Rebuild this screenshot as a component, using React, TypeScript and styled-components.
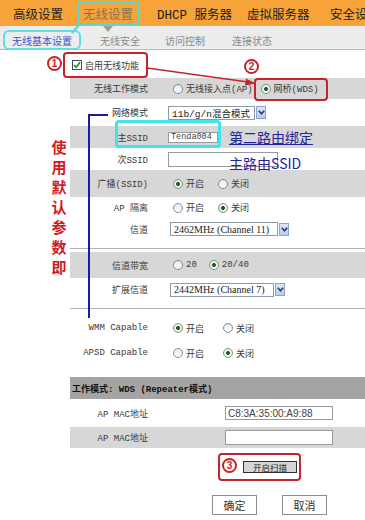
import React from "react";
import styled, { createGlobalStyle, css } from "styled-components";

const GlobalStyle = createGlobalStyle`
  html, body { margin: 0; padding: 0; background: #fff; }
  body { font-family: "Noto Sans CJK SC", sans-serif; }
  * { box-sizing: border-box; }
`;

const Page = styled.div`
  position: relative;
  width: 365px;
  height: 520px;
  overflow: hidden;
  background: #fff;
`;

/* ---------- top navigation ---------- */
const TopNav = styled.nav`
  display: grid;
  grid-template-columns: 70px 74px 90px 83px 1fr;
  align-items: center;
  height: 26px;
  padding-left: 7px;
  background: #f6a43a;
  position: relative;
  z-index: 2;
  overflow: hidden;
`;

const NavItem = styled.div<{ $active?: boolean }>`
  position: relative;
  justify-self: start;
  display: flex;
  align-items: center;
  height: 25px;
  padding: 0 6px;
  font: 12.5px "Liberation Mono", "Noto Sans CJK SC", monospace;
  color: #1c1c1c;
  white-space: nowrap;
  ${(p) =>
    p.$active &&
    css`
      color: #857257;
      border-radius: 3px;
      box-shadow: inset 0 0 0 2px #5bd7cf;
    `}
`;

const NavPointer = styled.div`
  position: absolute;
  left: 103px;
  top: 26px;
  border-top: 6px solid #9c9c9c;
  border-left: 5px solid transparent;
  border-right: 5px solid transparent;
  z-index: 3;
`;

/* ---------- sub navigation ---------- */
const SubNav = styled.nav`
  display: grid;
  grid-template-columns: 88px 65px 67px 1fr;
  align-items: end;
  height: 24px;
  padding: 0 0 1px 5px;
  background: #ececec;
  border-bottom: 1px solid #b9b9b9;
`;

const SubItem = styled.div<{ $active?: boolean }>`
  justify-self: start;
  display: flex;
  align-items: center;
  height: 16px;
  padding: 0 7px;
  font: 10px "Noto Sans CJK SC", sans-serif;
  color: #8a8a8a;
  white-space: nowrap;
  ${(p) =>
    p.$active &&
    css`
      color: #3657c9;
      border-radius: 4px;
      box-shadow: 0 0 0 2px #5ee0de;
    `}
`;

/* ---------- main body ---------- */
const Body = styled.div`
  display: flex;
`;

const Gutter = styled.div`
  width: 70px;
  flex: none;
`;

const Form = styled.div`
  flex: 1;
  padding-top: 2px;
`;

const Row = styled.div<{ $h: number; $shade?: boolean }>`
  display: grid;
  grid-template-columns: 78px 1fr;
  column-gap: 20px;
  align-items: center;
  height: ${(p) => p.$h}px;
  background: ${(p) => (p.$shade ? "#d7d7d7" : "transparent")};
`;

const PlainRow = styled.div<{ $h: number }>`
  display: flex;
  align-items: center;
  height: ${(p) => p.$h}px;
  padding-left: 2px;
  gap: 3px;
`;

const Label = styled.div`
  text-align: right;
  font: 9px "Liberation Mono", "Noto Sans CJK SC", monospace;
  color: #3a3a3a;
  white-space: nowrap;
`;

const Text = styled.span`
  font: 9px "Liberation Mono", "Noto Sans CJK SC", monospace;
  color: #3a3a3a;
  white-space: nowrap;
`;

const Controls = styled.div<{ $indent?: number }>`
  display: flex;
  align-items: center;
  padding-left: ${(p) => p.$indent ?? 0}px;
`;

const Divider = styled.hr<{ $above: number; $below: number }>`
  margin: ${(p) => p.$above}px 0 ${(p) => p.$below}px;
  border: 0;
  border-top: 1px solid #b3b3b3;
  height: 0;
`;

const SectionHead = styled.div`
  display: flex;
  align-items: center;
  height: 22px;
  margin-top: 12px;
  padding-left: 2px;
  background: #a4a4a4;
  font: bold 9px "Liberation Mono", "Noto Sans CJK SC", monospace;
  color: #111;
  white-space: nowrap;
`;

/* ---------- controls ---------- */
const Check = styled.span`
  display: inline-flex;
  align-items: center;
  justify-content: center;
  width: 10px;
  height: 10px;
  border: 1px solid #4b4b4b;
  background: #fff;
`;

const RadioGroup = styled.div<{ $gap: number }>`
  display: flex;
  align-items: center;
  gap: ${(p) => p.$gap}px;
  padding-left: 5px;
`;

const RadioItem = styled.label`
  display: flex;
  align-items: center;
  gap: 3px;
`;

const RadioDot = styled.span<{ $on?: boolean }>`
  width: 10px;
  height: 10px;
  border-radius: 50%;
  border: 1px solid ${(p) => (p.$on ? "#6f9a72" : "#7d8c9b")};
  background: ${(p) =>
    p.$on
      ? "radial-gradient(circle, #2c562e 0 1.6px, #e6efe6 2.2px, #fff 100%)"
      : "linear-gradient(#e9e9e9, #fff)"};
`;

const Select = styled.div`
  display: flex;
  align-items: center;
  gap: 1px;
`;

const SelectText = styled.span<{ $w: number; $serif?: boolean }>`
  display: flex;
  align-items: center;
  width: ${(p) => p.$w}px;
  height: 14px;
  padding-left: 3px;
  border: 1px solid #8e9aa6;
  background: #fff;
  font: ${(p) =>
    p.$serif
      ? '10px "Liberation Serif", "Noto Sans CJK SC", serif'
      : '9.5px "Liberation Mono", "Noto Sans CJK SC", monospace'};
  color: #222;
  white-space: nowrap;
  overflow: hidden;
`;

const DropBtn = styled.span`
  display: flex;
  align-items: center;
  justify-content: center;
  width: 10px;
  height: 13px;
  border: 1px solid #8fa4c8;
  background: linear-gradient(#dbe6fb, #b9cbf1);
`;

const Field = styled.input<{ $w: number; $h: number; $mono?: boolean }>`
  width: ${(p) => p.$w}px;
  height: ${(p) => p.$h}px;
  padding: 0 0 0 2px;
  margin: 0;
  border: 1px solid #9a9a9a;
  background: #fff;
  outline: none;
  font: ${(p) =>
    p.$mono
      ? '8.5px "Liberation Mono", monospace'
      : '10px "Liberation Sans", "Noto Sans", sans-serif'};
  color: #444;
`;

const ScanRow = styled.div`
  display: flex;
  height: 36px;
  padding: 13px 0 0 173px;
`;

const ScanButton = styled.button`
  width: 54px;
  height: 12px;
  padding: 0;
  border: 1px solid #333;
  background: #d6d6d6;
  font: 8.5px "Noto Sans CJK SC", sans-serif;
  line-height: 10px;
  color: #222;
`;

const ButtonRow = styled.div`
  display: flex;
  gap: 25px;
  padding: 11px 0 0 142px;
`;

const Button = styled.button`
  width: 45px;
  height: 20px;
  padding: 0;
  border: 1px solid #8c8c8c;
  background: #fff;
  font: 11px "Noto Sans CJK SC", sans-serif;
  color: #333;
`;

/* ---------- annotations (overlay) ---------- */
const Mark = styled.div<{ $x: number; $y: number; $w: number; $h: number; $c: string; $b: number; $r?: number }>`
  position: absolute;
  left: ${(p) => p.$x}px;
  top: ${(p) => p.$y}px;
  width: ${(p) => p.$w}px;
  height: ${(p) => p.$h}px;
  border: ${(p) => p.$b}px solid ${(p) => p.$c};
  border-radius: ${(p) => p.$r ?? 4}px;
  pointer-events: none;
  z-index: 3;
`;

const Num = styled.div<{ $x: number; $y: number }>`
  position: absolute;
  left: ${(p) => p.$x}px;
  top: ${(p) => p.$y}px;
  width: 15px;
  height: 15px;
  border: 2px solid #c8232b;
  border-radius: 50%;
  display: flex;
  align-items: center;
  justify-content: center;
  font: bold 10px "Liberation Sans", sans-serif;
  color: #c8232b;
  background: #fff;
  z-index: 3;
`;

const Drawing = styled.svg<{ $x: number; $y: number }>`
  position: absolute;
  left: ${(p) => p.$x}px;
  top: ${(p) => p.$y}px;
  overflow: visible;
  z-index: 3;
  pointer-events: none;
`;

const Bracket = styled.div`
  position: absolute;
  left: 88px;
  top: 114px;
  width: 20px;
  height: 204px;
  border-left: 2px solid #1b1ba3;
  border-top: 2px solid #1b1ba3;
  z-index: 3;
`;

const Note = styled.div<{ $x: number; $y: number; $u?: boolean }>`
  position: absolute;
  left: ${(p) => p.$x}px;
  top: ${(p) => p.$y}px;
  font: 14px "Noto Sans CJK SC", sans-serif;
  line-height: 16px;
  color: #22249b;
  white-space: nowrap;
  text-decoration: ${(p) => (p.$u ? "underline" : "none")};
  text-underline-offset: 1px;
  z-index: 3;
`;

const Vertical = styled.div`
  position: absolute;
  left: 51px;
  top: 137px;
  width: 16px;
  display: flex;
  flex-direction: column;
  font: bold 15px "Noto Sans CJK SC", sans-serif;
  line-height: 20px;
  color: #d11b1f;
  text-align: center;
  z-index: 3;
`;

const Chevron = () => (
  <svg width="7" height="5" viewBox="0 0 7 5">
    <path d="M0.8 0.8 L3.5 3.8 L6.2 0.8" fill="none" stroke="#2b3d6b" strokeWidth="1.6" />
  </svg>
);

const Radio = ({ on, children }: { on?: boolean; children: React.ReactNode }) => (
  <RadioItem>
    <RadioDot $on={on} />
    <Text>{children}</Text>
  </RadioItem>
);

const OnOff = ({ on, gap }: { on: boolean; gap: number }) => (
  <RadioGroup $gap={gap}>
    <Radio on={on}>开启</Radio>
    <Radio on={!on}>关闭</Radio>
  </RadioGroup>
);

const Dropdown = ({ w, serif, children }: { w: number; serif?: boolean; children: React.ReactNode }) => (
  <Select>
    <SelectText $w={w} $serif={serif}>{children}</SelectText>
    <DropBtn><Chevron /></DropBtn>
  </Select>
);

export default function App() {
  return (
    <Page>
      <GlobalStyle />
      <TopNav>
        <NavItem>高级设置</NavItem>
        <NavItem $active>无线设置</NavItem>
        <NavItem>DHCP 服务器</NavItem>
        <NavItem>虚拟服务器</NavItem>
        <NavItem>安全设置</NavItem>
      </TopNav>
      <NavPointer />
      <SubNav>
        <SubItem $active>无线基本设置</SubItem>
        <SubItem>无线安全</SubItem>
        <SubItem>访问控制</SubItem>
        <SubItem>连接状态</SubItem>
      </SubNav>

      <Body>
        <Gutter />
        <Form>
          <PlainRow $h={26}>
            <Check>
              <svg width="8" height="8" viewBox="0 0 8 8">
                <path d="M1 4 L3.2 6.3 L7 1.2" fill="none" stroke="#1d8a24" strokeWidth="1.6" />
              </svg>
            </Check>
            <Text>启用无线功能</Text>
          </PlainRow>

          <Row $h={21} $shade>
            <Label>无线工作模式</Label>
            <RadioGroup $gap={8}>
              <Radio>无线接入点(AP)</Radio>
              <Radio on>网桥(WDS)</Radio>
            </RadioGroup>
          </Row>

          <Row $h={27}>
            <Label>网络模式</Label>
            <Controls $indent={-3}>
              <Dropdown w={87}>11b/g/n混合模式</Dropdown>
            </Controls>
          </Row>

          <Row $h={22} $shade>
            <Label>主SSID</Label>
            <Controls>
              <Field $w={50} $h={11} $mono readOnly value="Tenda004" />
            </Controls>
          </Row>

          <Row $h={22}>
            <Label>次SSID</Label>
            <Controls>
              <Field $w={110} $h={15} readOnly value="" />
            </Controls>
          </Row>

          <Row $h={27} $shade>
            <Label>广播(SSID)</Label>
            <OnOff on gap={14} />
          </Row>

          <Row $h={21}>
            <Label>AP 隔离</Label>
            <OnOff on={false} gap={14} />
          </Row>

          <Row $h={22}>
            <Label>信道</Label>
            <Controls $indent={2}>
              <Dropdown w={108} serif>2462MHz (Channel 11)</Dropdown>
            </Controls>
          </Row>

          <Divider $above={8} $below={3} />

          <Row $h={26} $shade>
            <Label>信道带宽</Label>
            <RadioGroup $gap={12}>
              <Radio>20</Radio>
              <Radio on>20/40</Radio>
            </RadioGroup>
          </Row>

          <Row $h={23}>
            <Label>扩展信道</Label>
            <Controls $indent={2}>
              <Dropdown w={104} serif>2442MHz (Channel 7)</Dropdown>
            </Controls>
          </Row>

          <Divider $above={7} $below={6} />

          <Row $h={26}>
            <Label>WMM Capable</Label>
            <OnOff on gap={19} />
          </Row>

          <Row $h={24}>
            <Label>APSD Capable</Label>
            <OnOff on={false} gap={19} />
          </Row>

          <SectionHead>工作模式: WDS (Repeater模式)</SectionHead>

          <Row $h={28}>
            <Label>AP MAC地址</Label>
            <Controls $indent={57}>
              <Field $w={108} $h={14} readOnly value="C8:3A:35:00:A9:88" />
            </Controls>
          </Row>

          <Row $h={21} $shade>
            <Label>AP MAC地址</Label>
            <Controls $indent={57}>
              <Field $w={108} $h={15} readOnly value="" />
            </Controls>
          </Row>

          <ScanRow>
            <ScanButton>开启扫描</ScanButton>
          </ScanRow>

          <ButtonRow>
            <Button>确定</Button>
            <Button>取消</Button>
          </ButtonRow>
        </Form>
      </Body>

      {/* annotations */}
      <Drawing $x={0} $y={0} width="365" height="60">
        <line x1="79" y1="25" x2="72" y2="33" stroke="#5bd7cf" strokeWidth="2" />
      </Drawing>
      <Mark $x={115} $y={120} $w={106} $h={28} $c="#42e3ea" $b={3} />
      <Mark $x={63} $y={52} $w={85} $h={26} $c="#c3252c" $b={2} />
      <Mark $x={254} $y={78} $w={74} $h={23} $c="#c3252c" $b={2} />
      <Mark $x={218} $y={453} $w={83} $h={28} $c="#c3252c" $b={2} />
      <Num $x={47} $y={56}>1</Num>
      <Num $x={244} $y={59}>2</Num>
      <Num $x={222} $y={458}>3</Num>
      <Drawing $x={0} $y={0} width="365" height="100">
        <line x1="147" y1="68" x2="248" y2="82" stroke="#c3252c" strokeWidth="1.3" />
        <path d="M256 83.5 L246 78.5 L245 85.5 Z" fill="#c3252c" />
      </Drawing>
      <Bracket />
      <Note $x={229} $y={129} $u>第二路由绑定</Note>
      <Note $x={229} $y={155}>主路由SSID</Note>
      <Vertical>
        <span>使</span>
        <span>用</span>
        <span>默</span>
        <span>认</span>
        <span>参</span>
        <span>数</span>
        <span>即</span>
      </Vertical>
    </Page>
  );
}
